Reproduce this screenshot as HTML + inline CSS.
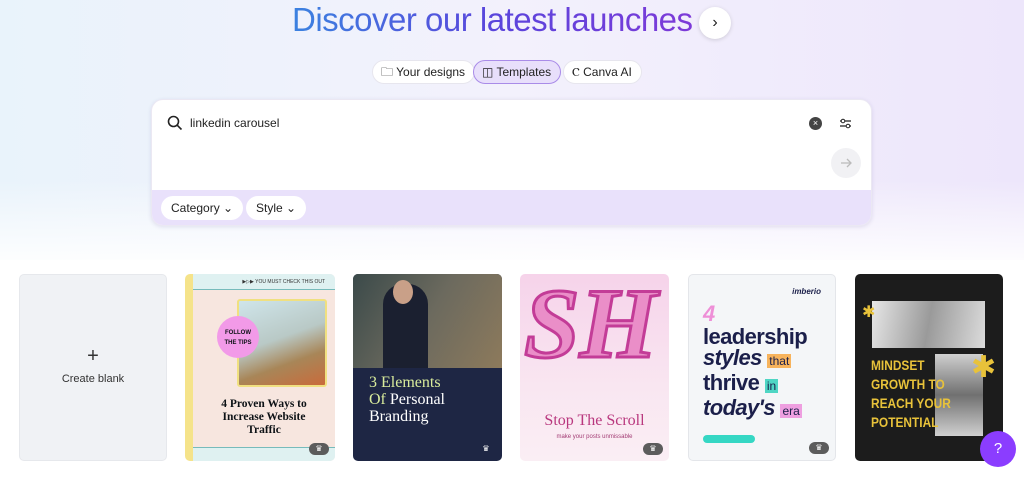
<!DOCTYPE html>
<html><head><meta charset="utf-8"><style>
*{box-sizing:border-box;margin:0;padding:0}
body{width:1024px;height:478px;overflow:hidden;font-family:"Liberation Sans",sans-serif;color:#0d1216;background:#fff;position:relative}
.bg{position:absolute;inset:0;height:260px;background:linear-gradient(90deg,#e9f3fb 0%,#f3f1fc 50%,#ede6fb 100%);}
.bg2{position:absolute;left:0;right:0;top:180px;height:90px;background:linear-gradient(180deg,rgba(255,255,255,0),#fff)}
h1{position:absolute;left:292px;top:1px;font-size:33px;font-weight:400;letter-spacing:-0.5px;background:linear-gradient(90deg,#3b82e0,#5a45dc 50%,#7d3ad8);-webkit-background-clip:text;color:transparent;white-space:nowrap}
.arr{position:absolute;left:699px;top:7px;width:32px;height:32px;border-radius:50%;background:#fff;box-shadow:0 1px 4px rgba(0,0,0,.15);font-size:16px;text-align:center;line-height:31px;color:#222}
.tab{position:absolute;top:60px;height:24px;border-radius:12px;background:#fff;border:1px solid #e7e6ee;font-size:12px;line-height:22px;padding:0 9px 0 8px;color:#222;white-space:nowrap}
.tab.on{background:#e8dffb;border-color:#a98be8}
.search{position:absolute;left:151px;top:99px;width:721px;height:127px;border-radius:12px;background:#fff;box-shadow:0 1px 4px rgba(60,40,120,.12);overflow:hidden;border:1px solid #ebe8f3}
.fbar{position:absolute;left:0;right:0;top:90px;height:37px;background:#e9e1fb}
.pill{position:absolute;top:6px;height:24px;border-radius:12px;background:#fff;font-size:12px;line-height:24px;padding:0 10px;color:#222}
.card{position:absolute;top:274px;height:187px;border-radius:5px;overflow:hidden}
.crown{position:absolute;right:6px;bottom:6px;width:20px;height:12px;border-radius:6px;background:#5c5c5c;color:#fff;font-size:8px;text-align:center;line-height:12px}
</style></head><body>
<div class="bg"></div><div class="bg2"></div>
<h1>Discover our latest launches</h1>
<div class="arr">›</div>
<div class="tab" style="left:372px">🗀 Your designs</div>
<div class="tab on" style="left:473px">◫ Templates</div>
<div class="tab" style="left:563px">Ⲥ Canva AI</div>
<div class="search">
 <svg style="position:absolute;left:15px;top:15px" width="16" height="16" viewBox="0 0 16 16"><circle cx="6.5" cy="6.5" r="5" fill="none" stroke="#222" stroke-width="1.6"/><path d="M10.3 10.3L14.5 14.5" stroke="#222" stroke-width="1.6"/></svg>
 <div style="position:absolute;left:38px;top:16px;font-size:12px;color:#222">linkedin carousel</div>
 <div style="position:absolute;left:657px;top:17px;width:13px;height:13px;border-radius:50%;background:#444;color:#fff;font-size:9px;line-height:13px;text-align:center">×</div>
 <svg style="position:absolute;left:687px;top:17px" width="13" height="13" viewBox="0 0 13 13"><path d="M1 4h11M1 9h11" stroke="#222" stroke-width="1.2"/><circle cx="4" cy="4" r="1.8" fill="#fff" stroke="#222"/><circle cx="9" cy="9" r="1.8" fill="#fff" stroke="#222"/></svg>
 <div style="position:absolute;left:679px;top:48px;width:30px;height:30px;border-radius:50%;background:#f1f1f4"><svg style="position:absolute;left:9px;top:9px" width="12" height="12" viewBox="0 0 12 12"><path d="M1 6h10M7 2l4 4-4 4" fill="none" stroke="#bbb" stroke-width="1.3"/></svg></div>
 <div class="fbar">
  <div class="pill" style="left:9px">Category ⌄</div>
  <div class="pill" style="left:94px">Style ⌄</div>
 </div>
</div>
<div class="card" style="left:19px;width:148px;background:#f0f2f5;border:1px solid #e6e8ec">
 <div style="position:absolute;top:70px;width:100%;text-align:center;font-size:20px;font-weight:300;color:#333">+</div>
 <div style="position:absolute;top:98px;width:100%;text-align:center;font-size:11px;color:#333">Create blank</div>
</div>
<div class="card" style="left:185px;width:150px;background:#f7e6df;border-left:8px solid #f5e38a">
 <div style="position:absolute;left:0;right:0;top:0;height:16px;background:#dff1f1;border-bottom:1px solid #7bb;font-size:5px;text-align:right;padding:5px 10px;color:#333">▶▷▶ YOU MUST CHECK THIS OUT</div>
 <div style="position:absolute;left:44px;top:25px;width:90px;height:88px;background:linear-gradient(160deg,#cfe5ea,#b9c9c6 45%,#a88658 70%,#c96b3b);border:2px solid #f0e080;border-radius:3px"></div>
 <div style="position:absolute;left:24px;top:42px;width:42px;height:42px;border-radius:50%;background:#f29ae8;font-size:6px;font-weight:bold;text-align:center;padding-top:12px;line-height:10px">FOLLOW<br>THE TIPS</div>
 <div style="position:absolute;left:0;right:0;top:124px;text-align:center;font-size:11.5px;font-weight:bold;font-family:'Liberation Serif',serif;line-height:13px">4 Proven Ways to<br>Increase Website<br>Traffic</div>
 <div style="position:absolute;left:0;right:0;bottom:0;height:14px;background:#dff1f1;border-top:1px solid #7bb"></div>
 <div class="crown">♛</div>
</div>
<div class="card" style="left:353px;width:149px;background:#1e2644">
 <div style="position:absolute;left:0;right:0;top:0;height:94px;background:linear-gradient(120deg,#3b4a4a,#6c6a5e 50%,#8d7a5c)"></div>
 <div style="position:absolute;left:30px;top:10px;width:45px;height:84px;background:#1b2030;border-radius:20px 20px 0 0"></div>
 <div style="position:absolute;left:40px;top:6px;width:20px;height:24px;background:#c9a088;border-radius:50%"></div>
 <div style="position:absolute;left:16px;top:100px;font-family:'Liberation Serif',serif;font-size:16px;line-height:17px;color:#fff"><span style="color:#d9ec9c">3 Elements<br>Of</span> Personal<br>Branding</div>
 <div class="crown" style="background:transparent">♛</div>
</div>
<div class="card" style="left:520px;width:149px;background:linear-gradient(180deg,#f6d3ea,#f9e6f1 60%,#faeef4)">
 <div style="position:absolute;left:4px;top:-8px;font-size:100px;font-weight:bold;font-style:italic;color:#ea8ec8;-webkit-text-stroke:3px #c33c97;font-family:'Liberation Serif',serif">SH</div>
 <div style="position:absolute;left:0;right:0;top:138px;text-align:center;font-family:'Liberation Serif',serif;font-size:16px;color:#b9377e">Stop The Scroll</div>
 <div style="position:absolute;left:0;right:0;top:160px;text-align:center;font-size:6px;color:#a33c74">make your posts unmissable</div>
 <div class="crown">♛</div>
</div>
<div class="card" style="left:688px;width:148px;background:#f4f6f8;border:1px solid #e4e6ea">
 <div style="position:absolute;right:14px;top:12px;font-size:8px;font-weight:bold;font-style:italic;color:#1b1f4a">imberio</div>
 <div style="position:absolute;left:14px;top:26px;font-size:22px;font-weight:bold;font-style:italic;color:#ee8fd7">4</div>
 <div style="position:absolute;left:14px;top:51px;font-size:22px;font-weight:bold;color:#1b1f4a;line-height:21px;letter-spacing:-0.6px">leadership<br><i>styles</i> <span style="font-size:12px;background:#f7b35c;padding:0 2px;font-weight:normal;letter-spacing:0">that</span><br>thrive <span style="font-size:12px;background:#4fd6c4;padding:0 2px;font-weight:normal;letter-spacing:0">in</span><br><i>today's</i> <span style="font-size:12px;background:#ee9fe0;padding:0 2px;font-weight:normal;letter-spacing:0">era</span></div>
 <div style="position:absolute;left:14px;top:160px;width:52px;height:8px;border-radius:4px;background:#35d7c4"></div>
 <div class="crown">♛</div>
</div>
<div class="card" style="left:855px;width:148px;background:#1c1c1c">
 <div style="position:absolute;left:17px;top:27px;width:113px;height:47px;background:linear-gradient(100deg,#e6e6e6,#9a9a9a 50%,#dcdcdc)"></div>
 <div style="position:absolute;left:80px;top:80px;width:48px;height:82px;background:linear-gradient(180deg,#cfcfcf,#707070 50%,#d0d0d0)"></div>
 <div style="position:absolute;left:16px;top:82px;font-size:14px;font-weight:bold;color:#e8c23a;line-height:19px;transform:scaleX(0.85);transform-origin:left">MINDSET<br>GROWTH TO<br>REACH YOUR<br>POTENTIAL</div>
 <div style="position:absolute;left:7px;top:28px;color:#e8c23a;font-size:16px">✱</div>
 <div style="position:absolute;left:116px;top:76px;color:#e8c23a;font-size:30px">✱</div>
</div>
<div style="position:absolute;left:980px;top:431px;width:36px;height:36px;border-radius:50%;background:#8b3dff;color:#fff;text-align:center;line-height:36px;font-size:15px">?</div>
</body></html>
